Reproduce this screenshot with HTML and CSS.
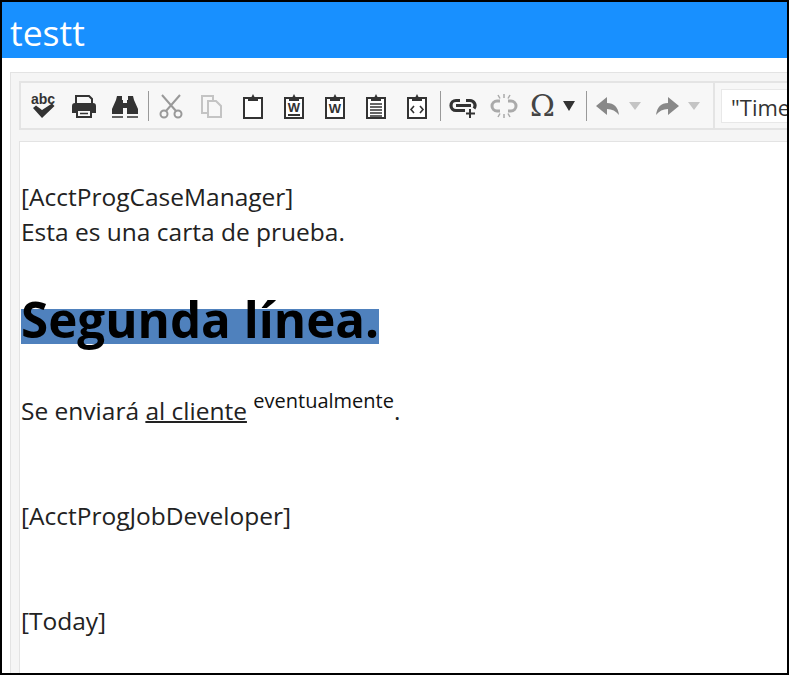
FILE: index.html
```html
<!DOCTYPE html>
<html lang="en">
<head>
<meta charset="UTF-8" />
<meta name="viewport" content="width=device-width, initial-scale=1" />
<title>testt</title>
<link rel="stylesheet" href="styles.css">
</head>
<body>
<div class="frame">

  <!-- Title bar -->
  <header class="title-bar">testt</header>

  <main class="content">
    <div class="editor-box">

      <!-- Toolbar -->
      <div class="toolbar">
        <div class="tool-group">
          <button class="tool" aria-label="Spellcheck">
            <svg viewBox="0 0 28 28"><text x="14" y="12" text-anchor="middle" class="abc">abc</text><path d="M4 16l3-2.500 6 4.500 10-6.500 2.500 2.500L13 26z" fill="#333"/></svg>
          </button>
          <button class="tool" aria-label="Print">
            <svg viewBox="0 0 28 28"><path d="M6 11V4h13l3 3v4" fill="none" stroke="#333" stroke-width="2"/><path d="M2 14a3 3 0 0 1 3-3h18a3 3 0 0 1 3 3v7h-4v-4H6v4H2z" fill="#333"/><path d="M7 18h14v7H7z" fill="none" stroke="#333" stroke-width="2"/><path d="M10 21.500h8" stroke="#333" stroke-width="1.500"/></svg>
          </button>
          <button class="tool" aria-label="Find">
            <svg viewBox="0 0 28 28"><path d="M6 4h5v4h1v14H1v-5L5 8z" fill="#333"/><path d="M22 4h-5v4h-1v14h11v-5L23 8z" fill="#333"/><path d="M12 11h4v5h-4z" fill="#333"/><path d="M1 25h11M16 25h11" stroke="#333" stroke-width="1.500"/></svg>
          </button>
          <span class="sep"></span>
          <button class="tool" aria-label="Cut">
            <svg viewBox="0 0 28 28"><g fill="none" stroke="#999" stroke-width="2"><circle cx="7" cy="22" r="3.500"/><circle cx="21" cy="22" r="3.500"/><path d="M9 19L23 3M19 19L5 3"/></g></svg>
          </button>
          <button class="tool" aria-label="Copy">
            <svg viewBox="0 0 28 28"><g fill="#f7f7f7" stroke="#c4c4c4" stroke-width="2"><path d="M4 4h11v17H4z"/><path d="M10 9h8l5 5v11H10z"/></g></svg>
          </button>
          <button class="tool" aria-label="Paste">
            <svg viewBox="0 0 28 28"><path d="M5 6h18v20H5z" fill="#fff" stroke="#333" stroke-width="2"/><path d="M9 9V6h3l2-4 2 4h3v3z" fill="#333"/></svg>
          </button>
          <button class="tool" aria-label="Paste from Word">
            <svg viewBox="0 0 28 28"><path d="M5 6h18v20H5z" fill="#fff" stroke="#333" stroke-width="2"/><path d="M9 9V6h3l2-4 2 4h3v3z" fill="#333"/><text x="14" y="20" text-anchor="middle" class="word">W</text><path d="M8 23h12" stroke="#333" stroke-width="2"/></svg>
          </button>
          <button class="tool" aria-label="Paste from Word, clean">
            <svg viewBox="0 0 28 28"><path d="M5 6h18v20H5z" fill="#fff" stroke="#333" stroke-width="2"/><path d="M9 9V6h3l2-4 2 4h3v3z" fill="#333"/><text x="14" y="21" text-anchor="middle" class="word">W</text></svg>
          </button>
          <button class="tool" aria-label="Paste as text">
            <svg viewBox="0 0 28 28"><path d="M5 6h18v20H5z" fill="#fff" stroke="#333" stroke-width="2"/><path d="M9 9V6h3l2-4 2 4h3v3z" fill="#333"/><path d="M8 12h12M8 15h12M8 18h12M8 21h12M8 24h12" stroke="#333" stroke-width="1.600"/></svg>
          </button>
          <button class="tool" aria-label="Paste as HTML">
            <svg viewBox="0 0 28 28"><path d="M5 6h18v20H5z" fill="#fff" stroke="#333" stroke-width="2"/><path d="M9 9V6h3l2-4 2 4h3v3z" fill="#333"/><path d="M11 14l-3 3.500 3 3.500M17 14l3 3.500-3 3.500" fill="none" stroke="#333" stroke-width="1.600"/></svg>
          </button>
          <span class="sep"></span>
          <button class="tool" aria-label="Insert link">
            <svg viewBox="0 0 28 28"><path d="M11 8.500H7a5 5 0 0 0 0 10h9M17 8.500h4a5 5 0 0 1 4 8M7 13.500h15" fill="none" stroke="#333" stroke-width="3.200"/><path d="M21 17v9M17 21.500h9" stroke="#333" stroke-width="2"/></svg>
          </button>
          <button class="tool" aria-label="Remove link">
            <svg viewBox="0 0 28 28"><path d="M10 9H7a5 5 0 0 0 0 10h3M18 9h3a5 5 0 0 1 0 10h-3" fill="none" stroke="#aaa" stroke-width="3"/><path d="M14 2v4M8 3l2 3.500M20 3l-2 3.500M14 26v-4M8 25l2-3.500M20 25l-2-3.500" stroke="#aaa" stroke-width="1.500"/></svg>
          </button>
          <button class="tool tool-omega" aria-label="Special character">
            <span class="omega">Ω</span><span class="caret"></span>
          </button>
          <span class="sep"></span>
          <button class="tool tool-arrow" aria-label="Undo">
            <svg viewBox="0 0 24 24"><path d="M11 3v6c7 0 11 4 12 12-3-4-7-6-12-6v6L0 12z" fill="#888"/></svg><span class="caret caret-off"></span>
          </button>
          <button class="tool tool-arrow" aria-label="Redo">
            <svg viewBox="0 0 24 24"><path d="M13 3v6C6 9 2 13 1 21c3-4 7-6 12-6v6l11-9z" fill="#888"/></svg><span class="caret caret-off"></span>
          </button>
        </div>
        <div class="font-group">
          <div class="font-select">"Times New Roman"</div>
        </div>
      </div>

      <!-- Document -->
      <div class="document">
        <p class="line">[AcctProgCaseManager]<br>Esta es una carta de prueba.</p>
        <h1 class="heading"><span class="marked">Segunda línea.</span></h1>
        <p class="line">Se enviará <u>al cliente</u> <sup>eventualmente</sup>.</p>
        <p class="line gap">[AcctProgJobDeveloper]</p>
        <p class="line gap">[Today]</p>
      </div>

    </div>
  </main>
</div>
</body>
</html>
```

FILE: styles.css
```css
* {
  box-sizing: border-box;
}
body {
  margin: 0;
  font-family: "Open Sans", "Noto Sans", sans-serif;
  background: #fff;
  overflow: hidden;
}

.frame {
  height: 675px;
  border: 2px solid #000;
  overflow: hidden;
}

/* Title bar */
.title-bar {
  height: 56px;
  padding-left: 8px;
  background: #1890ff;
  color: #fff;
  font-size: 35.500px;
  line-height: 60px;
}

.content {
  padding: 14px 0 0 8px;
}

.editor-box {
  width: 900px;
  height: 640px;
  padding: 8px;
  background: #f5f5f5;
  border: 1px solid #e3e3e3;
  border-bottom: none;
}

/* Toolbar */
.toolbar {
  display: flex;
  height: 49px;
  background: #f7f7f7;
  border: 2px solid #e4e4e4;
}
.tool-group {
  display: flex;
  align-items: center;
  width: 694px;
  padding-left: 1px;
  border-right: 2px solid #e4e4e4;
  flex: none;
}
.tool {
  display: flex;
  align-items: center;
  justify-content: center;
  width: 41px;
  height: 36px;
  padding: 0;
  background: transparent;
  border: none;
  flex: none;
}
.tool svg {
  width: 28px;
  height: 28px;
}
.sep {
  width: 1px;
  height: 30px;
  margin: 0 1px 0 3px;
  background: #999;
  flex: none;
}
.abc {
  font-size: 14px;
  font-weight: 700;
  fill: #333;
}
.word {
  font-size: 13px;
  font-weight: 700;
  fill: #333;
}
.tool-omega {
  width: 59px;
  gap: 8px;
  justify-content: flex-start;
  padding-left: 6px;
}
.omega {
  font-family: "DejaVu Serif", serif;
  font-size: 30px;
  line-height: 1;
  color: #444;
}
.caret {
  width: 0;
  height: 0;
  border-left: 6px solid transparent;
  border-right: 6px solid transparent;
  border-top: 10px solid #333;
}
.caret-off {
  border-left-width: 6px;
  border-right-width: 6px;
  border-top: 8px solid #c4c4c4;
}
.tool-arrow {
  width: 59px;
  gap: 9px;
  justify-content: flex-start;
  padding-left: 8px;
}
.tool-arrow svg {
  width: 24px;
  height: 24px;
}
.font-group {
  padding: 6px;
  flex-grow: 1;
}
.font-select {
  height: 34px;
  padding-left: 9px;
  background: #fff;
  border: 1px solid #e8e8e8;
  color: #333;
  font-size: 22px;
  line-height: 34px;
  white-space: nowrap;
  overflow: hidden;
}

/* Document */
.document {
  height: 560px;
  margin-top: 11px;
  padding: 37px 0 0 1px;
  background: #fff;
  border: 1px solid #e3e3e3;
  color: #222;
  font-size: 24.500px;
  line-height: 35px;
}
.line {
  margin: 0;
}
.gap {
  margin-top: 70px;
}
.heading {
  margin: 47px 0 51px;
  font-size: 49.300px;
  font-weight: 700;
  line-height: 46px;
  color: #000;
}
/* selection band sits low behind the big text, only 35px tall */
.marked {
  background: linear-gradient(#4f81bd, #4f81bd) no-repeat 0 24px / 100% 35px;
}
.line u {
  text-decoration-thickness: 2px;
}
.line sup {
  font-size: 20px;
  line-height: 0;
  vertical-align: 12px;
  color: #111;
}
```
